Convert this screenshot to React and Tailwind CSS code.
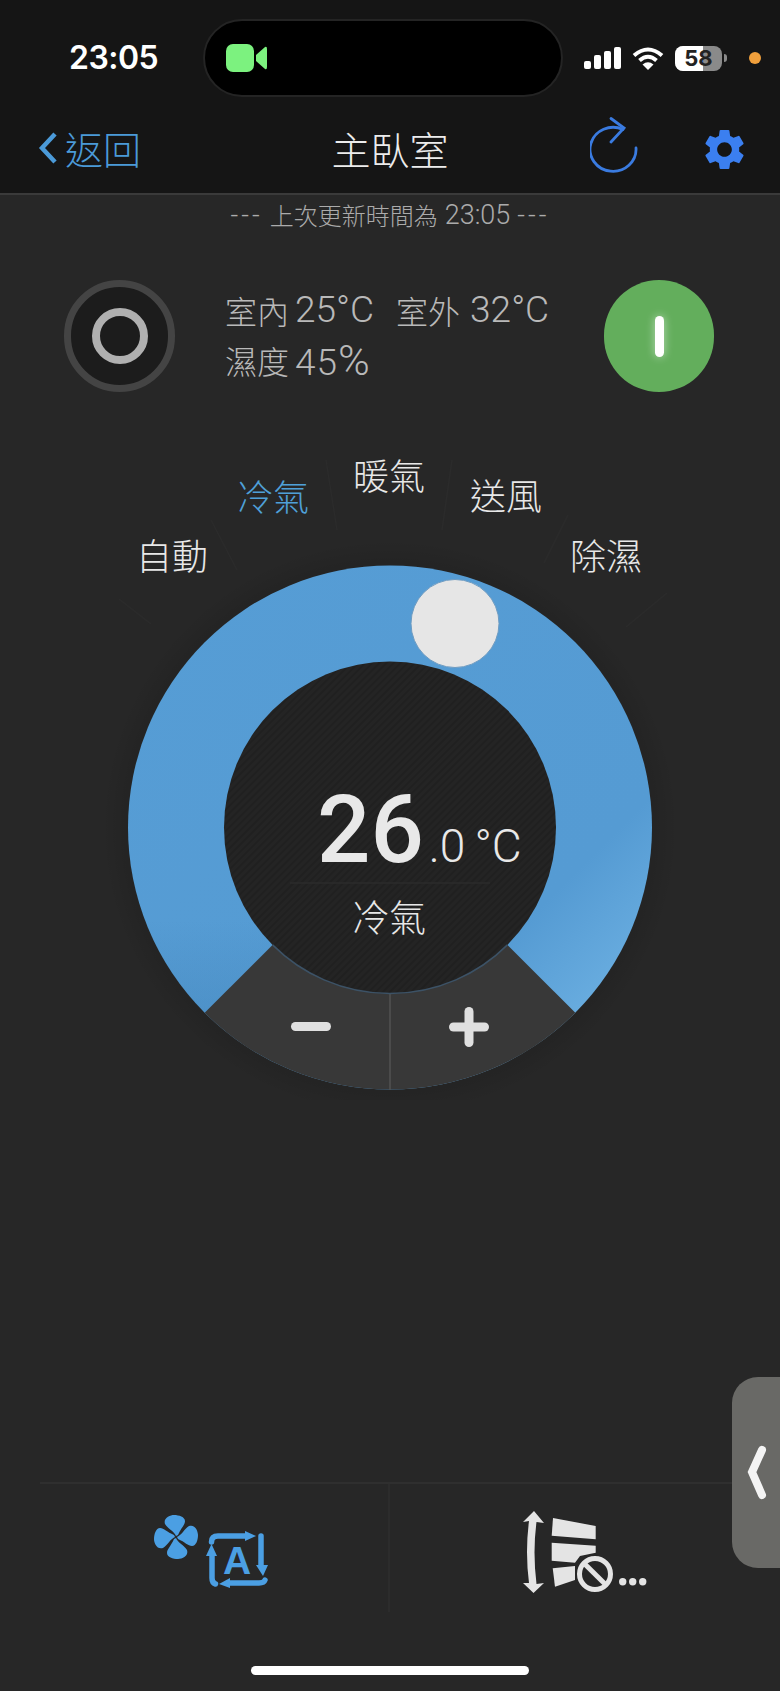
import React from "react";
import { MdSettings } from "react-icons/md";

const cjk = "font-['Noto_Sans_CJK_TC','Noto_Sans',sans-serif] font-light";
const thinNum = "font-['Roboto',sans-serif] font-light";

const modes = [
  { label: "自動", pos: "left-[136px] top-[95px]", color: "text-[#e8e8e8]" },
  { label: "冷氣", pos: "left-[237px] top-[36px]", color: "text-[#4fa0d8]" },
  { label: "暖氣", pos: "left-[353px] top-[15px]", color: "text-[#e8e8e8]" },
  { label: "送風", pos: "left-[470px] top-[35px]", color: "text-[#e8e8e8]" },
  { label: "除濕", pos: "left-[570px] top-[95px]", color: "text-[#e8e8e8]" },
];

const StatusBar = () => (
  <div className="flex items-center h-[97px] pt-[19px]">
    <span className="w-[203px] shrink-0 pl-[69px] text-[32px] font-semibold text-white font-['Inter',sans-serif] tracking-[-0.5px]">
      23:05
    </span>
    <div className="w-[360px] h-[78px] shrink-0 rounded-full bg-black border-2 border-[#242424] flex items-center pl-[21px]">
      <svg width="42" height="28" viewBox="0 0 42 28">
        <rect x="0" y="0" width="28" height="28" rx="7" fill="#7cf27f" />
        <path d="M30 11 L39 3 Q41 2 41 5 V23 Q41 26 39 25 L30 17 Z" fill="#7cf27f" />
      </svg>
    </div>
    <div className="flex items-end gap-[3px] ml-[21px] h-[22px]">
      <div className="w-[7px] h-[8px] bg-white rounded-[2px]" />
      <div className="w-[7px] h-[14px] bg-white rounded-[2px]" />
      <div className="w-[7px] h-[18px] bg-white rounded-[2px]" />
      <div className="w-[7px] h-[22px] bg-white rounded-[2px]" />
    </div>
    <svg className="ml-[11px]" width="32" height="23" viewBox="0 0 32 23">
      <path d="M2 8.5 Q16 -3.5 30 8.5" fill="none" stroke="#fff" strokeWidth="4" />
      <path d="M7.5 13.5 Q16 6 24.5 13.5" fill="none" stroke="#fff" strokeWidth="4" />
      <path d="M16 23 L10.5 17.5 Q16 13 21.5 17.5 Z" fill="#fff" />
    </svg>
    <div className="relative ml-[11px] w-[47px] h-[25px] rounded-[8px] overflow-hidden flex bg-[#8a8a8a]">
      <div className="w-[28px] bg-white" />
      <span className="absolute inset-0 text-center text-[22px] leading-[25px] font-bold text-[#222] font-['Inter',sans-serif]">
        58
      </span>
    </div>
    <div className="w-[3px] h-[8px] bg-[#8a8a8a] rounded-r-full ml-[2px]" />
    <div className="w-[12px] h-[12px] rounded-full bg-[#f0a03c] ml-[22px]" />
  </div>
);

const NavBar = () => (
  <div className="flex items-center h-[96px] pt-[5px]">
    <div className="w-[200px] pl-[38px] flex items-center gap-[7px]">
      <svg width="20" height="34" viewBox="0 0 20 34">
        <path d="M17 3 L4 17 L17 31" fill="none" stroke="#4b9ad8" strokeWidth="4.5" />
      </svg>
      <span className={`text-[38px] leading-[40px] text-[#4b9ad8] ${cjk}`}>返回</span>
    </div>
    <h1 className={`flex-1 text-center text-[39px] leading-[40px] text-[#ececec] ${cjk}`}>
      主臥室
    </h1>
    <div className="w-[200px] flex items-center pl-[10px] gap-[63px]">
      <svg width="48" height="60" viewBox="0 0 48 60" className="mb-[1px]">
        <path
          d="M33 12.5 A23 22 0 1 0 46 31"
          fill="none"
          stroke="#3a7be0"
          strokeWidth="2.8"
          strokeLinecap="round"
        />
        <path
          d="M21 1.5 L34 11 L21 25"
          fill="none"
          stroke="#3a7be0"
          strokeWidth="2.8"
          strokeLinecap="round"
        />
      </svg>
      <MdSettings className="text-[#3b7ff0] -ml-[1px] mt-[4px]" size={49} />
    </div>
  </div>
);

const ClimateStatus = () => (
  <div className="flex items-center mt-[45px] pl-[64px]">
    <div className="w-[111px] h-[112px] shrink-0 rounded-full bg-[#1c1c1c] border-[7px] border-[#444] flex items-center justify-center">
      <div className="w-[56px] h-[56px] rounded-full border-[8px] border-[#b0b0b0]" />
    </div>
    <div className={`ml-[50px] w-[379px] shrink-0 text-[32px] leading-[50px] text-[#b9b9b9] ${cjk}`}>
      <div className="flex">
        <span>室內</span>
        <span className={`ml-[6px] text-[37px] ${thinNum}`}>25°C</span>
        <span className="ml-[22px]">室外</span>
        <span className={`ml-[10px] text-[37px] ${thinNum}`}>32°C</span>
      </div>
      <div className="flex">
        <span>濕度</span>
        <span className={`ml-[6px] text-[37px] tracking-[1px] ${thinNum}`}>
          45<span className="text-[43px]">%</span>
        </span>
      </div>
    </div>
    <div className="w-[110px] h-[112px] shrink-0 rounded-full bg-[#63ae5c] flex items-center justify-center">
      <div className="w-[9px] h-[41px] rounded-full bg-white shadow-[0_0_10px_rgba(255,255,255,0.55)]" />
    </div>
  </div>
);

const Dial = () => (
  <div className="relative h-[660px] mt-[48px]">
    <svg width="780" height="660" viewBox="0 0 780 660" className="block">
      <defs>
        <linearGradient id="ring" x1="0" y1="0" x2="1" y2="1">
          <stop offset="0" stopColor="#569dd5" />
          <stop offset="0.72" stopColor="#559bd3" />
          <stop offset="0.86" stopColor="#68acdf" />
          <stop offset="1" stopColor="#68acdf" />
        </linearGradient>
        <linearGradient id="ringLeft" x1="0" y1="0" x2="0" y2="1">
          <stop offset="0.5" stopColor="#3f7fb4" stopOpacity="0" />
          <stop offset="1" stopColor="#3f7fb4" stopOpacity="0.35" />
        </linearGradient>
        <pattern id="stripes" width="5" height="5" patternUnits="userSpaceOnUse" patternTransform="rotate(-45)">
          <rect width="5" height="5" fill="#242424" />
          <rect width="5" height="2" fill="#202020" />
        </pattern>
        <radialGradient id="halo" cx="0.5" cy="0.5" r="0.5">
          <stop offset="0.9" stopColor="#000" stopOpacity="0.1" />
          <stop offset="1" stopColor="#000" stopOpacity="0" />
        </radialGradient>
      </defs>
      <g stroke="#2b2b2b" strokeWidth="1.5">
        <line x1="119" y1="159" x2="151" y2="184" />
        <line x1="211" y1="80" x2="237" y2="130" />
        <line x1="326" y1="20" x2="337" y2="90" />
        <line x1="452" y1="20" x2="442" y2="90" />
        <line x1="568" y1="75" x2="544" y2="123" />
        <line x1="667" y1="153" x2="626" y2="187" />
      </g>
      <circle cx="390" cy="387.5" r="288" fill="url(#halo)" />
      <circle cx="390" cy="387.5" r="262" fill="url(#ring)" />
      <path d="M390 387.5 L204.7 572.8 A262 262 0 0 1 128 387.5 Z" fill="url(#ringLeft)" />
      <path d="M390 387.5 L204.7 572.8 A262 262 0 0 0 575.3 572.8 Z" fill="#383838" />
      <line x1="390" y1="553" x2="390" y2="650" stroke="#525252" strokeWidth="1.5" />
      <circle cx="390" cy="387.5" r="166" fill="url(#stripes)" />
      <path d="M272.6 504.9 A166 166 0 0 0 507.4 504.9" fill="none" stroke="#3c5266" strokeWidth="1.5" />
      <circle cx="455" cy="183.5" r="44" fill="#e6e6e6" stroke="#6f9cc2" strokeWidth="1" />
      <line x1="290" y1="443" x2="490" y2="443" stroke="#2b2b2b" strokeWidth="1.5" />
      <rect x="291" y="582" width="40" height="9" rx="4.5" fill="#e0e0e0" />
      <rect x="449" y="582.5" width="40" height="9" rx="4.5" fill="#e0e0e0" />
      <rect x="464.5" y="567" width="9" height="40" rx="4.5" fill="#e0e0e0" />
    </svg>

    {modes.map((mode) => (
      <span
        key={mode.label}
        className={`absolute ${mode.pos} ${mode.color} text-[36px] leading-[38px] ${cjk}`}
      >
        {mode.label}
      </span>
    ))}

    <div className="absolute left-[317px] top-[337px] flex items-baseline text-[#e8e8e8]">
      <span className="text-[94px] leading-[106px] font-medium font-['Roboto',sans-serif]">26</span>
      <span className={`text-[46px] leading-[106px] ml-[5px] ${thinNum}`}>.0</span>
      <span className={`text-[46px] leading-[106px] ml-[9px] ${thinNum}`}>°C</span>
    </div>
    <span className={`absolute left-[352px] top-[457px] text-[37px] leading-[38px] text-[#e8e8e8] ${cjk}`}>
      冷氣
    </span>
  </div>
);

const FanIcon = () => (
  <svg width="48" height="48" viewBox="-24 -24 48 48" className="shrink-0">
    {[0, 90, 180, 270].map((deg) => (
      <path
        key={deg}
        transform={`rotate(${deg})`}
        d="M0 -1 C-2 -6 -8 -8 -11 -13 C-13 -19 -6 -22 -2 -22 C3 -22 9 -20 9 -16 C9 -12 5 -9 2 -2 Z"
        fill="#4b9fe3"
      />
    ))}
  </svg>
);

const AutoIcon = () => (
  <svg width="64" height="58" viewBox="0 0 64 58" className="ml-[6px] mt-[18px] shrink-0">
    <g fill="none" stroke="#4b9fe3" strokeWidth="5.5" strokeLinecap="round">
      <path d="M5.5 11 Q5.5 5 12 5 H40" />
      <path d="M55 5 V34" />
      <path d="M59 49 Q58 52 53 52 H24" />
      <path d="M6 25 V47 Q6 52 9.5 53" />
    </g>
    <g fill="#4b9fe3">
      <path d="M39 0 L50 5 L39 10 Z" />
      <path d="M50 34 H62 L57 45 Z" />
      <path d="M13 53 L24 47 V57 Z" />
      <path d="M0 25 L5.5 13 L11 25 Z" />
    </g>
    <text
      x="31"
      y="43"
      textAnchor="middle"
      fontFamily="Liberation Sans, sans-serif"
      fontWeight="700"
      fontSize="39"
      fill="#4b9fe3"
    >
      A
    </text>
  </svg>
);

const SwingIcon = () => (
  <svg width="124" height="84" viewBox="0 0 124 84" className="shrink-0">
    <g fill="#e4e4e4">
      <path d="M11 0 L21 12 L13.5 11 Q9.5 41 13.5 73 L21 72 L10.5 82 L0 72 L6 72 Q2 41 6 10 L0 11 Z" />
      <path d="M30 7 L72.7 15 V28.3 L28.7 24.7 Z" />
      <path d="M28.7 31.7 L72.7 34.7 V41.7 L57 45 L52 51.7 L28.7 49.7 Z" />
      <path d="M29.7 57.3 L52 55 V69 L32 75.7 Z" />
      <circle cx="99.7" cy="70.7" r="3.7" />
      <circle cx="109.7" cy="70.7" r="3.7" />
      <circle cx="119.7" cy="70.7" r="3.7" />
    </g>
    <circle cx="72" cy="63" r="15.5" fill="#272727" stroke="#e4e4e4" strokeWidth="5" />
    <line x1="62" y1="53.3" x2="82" y2="73" stroke="#e4e4e4" strokeWidth="5" />
  </svg>
);

const BottomBar = () => (
  <div className="mt-auto">
    <div className="grid grid-cols-2 h-[130px] border-t-2 border-[#2f2f2f] mx-[40px]">
      <div className="border-r-2 border-[#2c2c2c] flex items-start pl-[112px] pt-[29px]">
        <FanIcon />
        <AutoIcon />
      </div>
      <div className="flex items-start pl-[133px] pt-[27px]">
        <SwingIcon />
      </div>
    </div>
    <div className="flex justify-center pt-[54px] pb-[16px]">
      <div className="w-[278px] h-[9px] rounded-full bg-white" />
    </div>
  </div>
);

export default function App() {
  return (
    <div className="relative w-[780px] h-[1691px] overflow-hidden bg-[#272727] flex flex-col">
      <header className="bg-[#151515] border-b-2 border-[#3a3a3a]">
        <StatusBar />
        <NavBar />
      </header>
      <p className={`flex justify-center items-center gap-[7px] h-[40px] text-[24px] leading-[40px] text-[#ababab] ${cjk}`}>
        <span className={`text-[27px] tracking-[3px] ${thinNum}`}>---</span>
        <span>上次更新時間為</span>
        <span className={`text-[27px] ${thinNum}`}>23:05</span>
        <span className={`text-[27px] tracking-[3px] ${thinNum}`}>---</span>
      </p>
      <ClimateStatus />
      <Dial />
      <BottomBar />

      {/* side drawer handle sits over the page */}
      <div className="absolute right-0 top-[1377px] w-[48px] h-[191px] rounded-l-[26px] bg-[#696966] flex items-center pl-[15px]">
        <svg width="20" height="56" viewBox="0 0 20 56">
          <path d="M15 5 L5 27 L15 50" fill="none" stroke="#f4f4f4" strokeWidth="8" strokeLinecap="round" />
        </svg>
      </div>
    </div>
  );
}
